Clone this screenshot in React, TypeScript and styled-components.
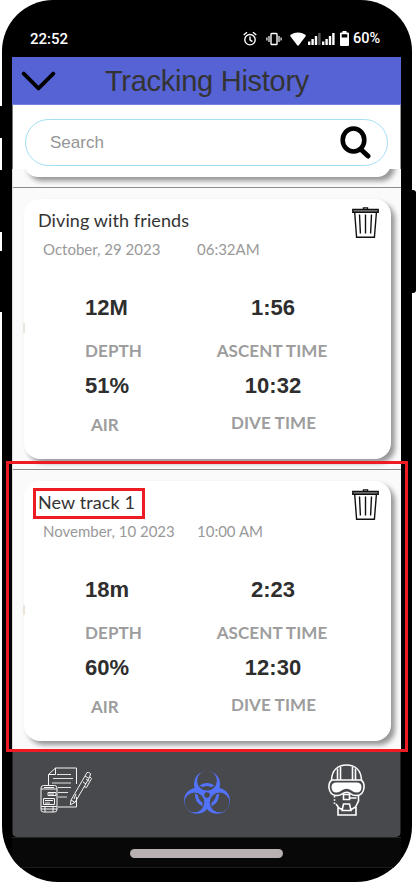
import React from "react";
import styled, { createGlobalStyle } from "styled-components";

const Global = createGlobalStyle`
  * { box-sizing: border-box; }
  body { margin: 0; background: #fff; overflow: hidden; }
`;

const Stage = styled.main`
  position: relative;
  width: 417px;
  height: 883px;
  overflow: hidden;
  font-family: "Liberation Sans", Arial, sans-serif;
`;

const SideKey = styled.i<{ $top: number; $height: number; $right?: boolean }>`
  position: absolute;
  top: ${(p) => p.$top}px;
  height: ${(p) => p.$height}px;
  width: 8px;
  ${(p) => (p.$right ? "left: 408px; border-radius: 0 3px 3px 0;" : "left: -6px;")}
  background: #000;
`;

const Phone = styled.div`
  position: relative;
  width: 410px;
  height: 882px;
  margin-left: 2px;
  padding: 0 11px 0 10px;
  border-radius: 51px 51px 56px 56px;
  background: #000;
  overflow: hidden;
`;

const StatusBar = styled.header`
  display: flex;
  justify-content: space-between;
  align-items: center;
  height: 57px;
  padding: 20px 19px 0 18px;
  color: #fff;
  font: 500 15px/18px Roboto, sans-serif;
`;

const StatusIcons = styled.div`
  display: flex;
  align-items: center;
`;

const Percent = styled.span`
  margin-left: 4px;
  width: 29px;
  padding-top: 1px;
  font-size: 14.5px;
  font-weight: 500;
`;

const TitleBar = styled.div`
  display: flex;
  align-items: center;
  height: 48px;
  padding-left: 9px;
  background: #5663d5;
  border-bottom: 1px solid #7781e0;
`;

const Heading = styled.h1`
  margin: 0 0 0 49px;
  color: #333;
  font-size: 29px;
  letter-spacing: -0.27px;
  font-weight: 400;
  line-height: 48px;
  white-space: nowrap;
`;

const SearchArea = styled.div`
  height: 64px;
  padding: 14px 12px 0 12px;
  background: #fff;
  border-left: 1px solid #777;
  border-right: 1px solid #999;
`;

const SearchBox = styled.label`
  display: flex;
  align-items: center;
  justify-content: space-between;
  height: 47px;
  padding: 0 16px 0 24px;
  border: 1px solid #a4def3;
  border-radius: 24px;
  color: #959595;
  font-size: 17px;
`;

const List = styled.section`
  height: 582px;
  background: #fafafa;
  border-left: 1px solid #ddd;
  overflow: hidden;
`;

const PreviousTail = styled.div`
  height: 18px;
  overflow: hidden;

  &::before {
    content: "";
    display: block;
    width: 367px;
    height: 28px;
    margin: -20px 0 0 11px;
    border-radius: 16px;
    background: #fff;
    box-shadow: 4px 4px 5px rgba(0, 0, 0, 0.4);
  }
`;

const Track = styled.article`
  height: 282px;
  padding: 11px 10px 0 11px;
  border-top: 1px solid #8c8c8c;
`;

const Card = styled.div`
  position: relative;
  width: 367px;
  height: 260px;
  padding: 7px 12px 0 14px;
  border-radius: 16px;
  background: #fff;
  box-shadow: 4px 4px 5px rgba(0, 0, 0, 0.4);

  &::before {
    content: "";
    position: absolute;
    left: -1px;
    top: 124px;
    width: 2px;
    height: 10px;
    background: #ebe4da;
  }
`;

const CardTop = styled.div`
  display: flex;
  justify-content: space-between;
  height: 34px;
`;

const Name = styled.h2`
  margin: 0;
  color: #333;
  font: 400 18px/28px Lato, sans-serif;
  letter-spacing: 0.1px;
`;

const When = styled.div`
  display: grid;
  grid-template-columns: 154px 1fr;
  height: 52px;
  padding-left: 5px;
  color: #999;
  font: 400 15px/18px Lato, sans-serif;
`;

const Stats = styled.div`
  display: grid;
  grid-template-columns: 129px 118px;
  padding-left: 47px;
`;

const Reading = styled.div<{ $center?: boolean }>`
  display: flex;
  flex-direction: column;
  height: 78px;
  align-items: ${(p) => (p.$center ? "center" : "flex-start")};
`;

const Value = styled.strong`
  height: 43px;
  color: #2e2e2e;
  font-size: 22px;
  line-height: 32px;
`;

const Label = styled.span<{ $indent?: number; $lift?: number }>`
  margin-left: ${(p) => p.$indent ?? 0}px;
  margin-top: ${(p) => -(p.$lift ?? 0)}px;
  color: #9d9d9d;
  font: 700 17px/32px Lato, sans-serif;
  letter-spacing: ${(p) => (p.$indent === 6 ? 0 : 0.1)}px;
  white-space: nowrap;
`;

const BottomNav = styled.nav`
  display: flex;
  height: 86px;
  padding: 13px 36px 0 28px;
  justify-content: space-between;
  align-items: flex-start;
  background: linear-gradient(90deg, #222 1px, #48494d 1px, #48494d 388px, #222 388px);
  border-radius: 0 0 5px 5px;
`;

const HomeStrip = styled.footer`
  display: flex;
  justify-content: center;
  height: 31px;
  padding-top: 11px;
  background: #080808;
  border-top: 1px solid #242424;
  border-bottom: 1px solid #1c1c1c;
`;

const HomePill = styled.i`
  width: 153px;
  height: 9px;
  border-radius: 5px;
  background: #b9b1b1;
`;

const Mark = styled.div<{ $x: number; $y: number; $w: number; $h: number }>`
  position: absolute;
  left: ${(p) => p.$x}px;
  top: ${(p) => p.$y}px;
  width: ${(p) => p.$w}px;
  height: ${(p) => p.$h}px;
  border: 3px solid #ed1c24;
`;

const Icon = styled.svg<{ $ml?: number; $mt?: number }>`
  display: block;
  flex: none;
  margin-left: ${(p) => p.$ml ?? 0}px;
  margin-top: ${(p) => p.$mt ?? 0}px;
`;

const AlarmIcon = () => (
  <Icon width="14" height="16" viewBox="0 0 14 16" fill="none" stroke="#fff" strokeWidth="1.4">
    <circle cx="7" cy="8.7" r="5.2" />
    <path d="M.7 4 4 1.2M13.3 4 10 1.2M7 5.5v3.4l2.4 1.7" />
  </Icon>
);

const VibrateIcon = () => (
  <Icon $ml={9} width="16" height="14" viewBox="0 0 16 14" fill="none" stroke="#fff" strokeWidth="1.4">
    <rect x="5" y="1.5" width="6" height="11" rx=".8" />
    <path d="M3 4v6M13 4v6M.9 5.5v3M15.1 5.5v3" strokeWidth="1.2" />
  </Icon>
);

const WifiIcon = () => (
  <Icon $ml={8} width="16" height="14" viewBox="0 0 16 14">
    <path d="M0 3.8C4-.6 12-.6 16 3.8L8.8 13.3Q8 14.2 7.2 13.3Z" fill="#fff" />
  </Icon>
);

const SignalIcon = ({ dim }: { dim?: boolean }) => (
  <Icon $ml={dim ? 2 : 1} width="13" height="12" viewBox="0 0 13 12" fill="#fff">
    <path d="M0 8.500h2.400V12H0zM3.400 6h2.400v6H3.400zM6.800 3h2.400v9H6.800z" />
    <path d="M10.200 0h2.400v12h-2.400z" opacity={dim ? 0.35 : 1} />
  </Icon>
);

const BatteryIcon = () => (
  <Icon $ml={5} width="9" height="15" viewBox="0 0 9 15" fill="#fff">
    <path fillRule="evenodd" d="M2.500 0h4v1.500H8q1 0 1 1V14q0 1-1 1H1q-1 0-1-1V2.500q0-1 1-1h1.500zM1.700 3.300v3.200h5.600V3.300z" />
  </Icon>
);

const ChevronIcon = () => (
  <Icon $mt={1} width="35" height="20" viewBox="0 0 35 20" fill="none" stroke="#000" strokeWidth="3.8" strokeLinecap="round" strokeLinejoin="round">
    <path d="M2.700 2.600 17.500 17.400 32.300 2.600" />
  </Icon>
);

const SearchIcon = () => (
  <Icon width="31" height="33" viewBox="0 0 31 33" fill="none" stroke="#000">
    <ellipse cx="13.500" cy="14" rx="10.800" ry="11.500" strokeWidth="4.600" />
    <path d="m21.500 24 6.500 6" strokeWidth="5" strokeLinecap="round" />
  </Icon>
);

const TrashIcon = () => (
  <Icon $mt={1} width="27" height="32" viewBox="0 0 27 32" fill="none" stroke="#111" strokeWidth="1.400">
    <path d="M11.500 2.200V.9h4v1.300" />
    <path d="M.8 2.500h25.400v2.700H.8z" fill="#888" />
    <path d="m2.700 5.500 1.900 24.700h17.800l2-24.700" />
    <path d="m7.500 7.500.9 19M13.500 7.500v19M19.500 7.500l-.9 19" />
  </Icon>
);

const LogbookIcon = () => (
  <Icon $mt={3} width="53" height="46" viewBox="0 0 53 46" fill="none" stroke="#f4f4f4" strokeWidth="1">
    <path d="M8.500 18V7.500l7-6.500h21v16M36.500 30v10H18M8.500 7.500h7V1" />
    <path d="M17 7.500h14M13 11.500h20M12 16h19M18 20.500h13M18 25.500h10M18 30h9" strokeWidth=".9" />
    <rect x="1" y="18.500" width="16" height="26.500" rx="2.500" />
    <path d="M1 22h16M4 20.500h10M1 39.500h16M1 42h16M5 39.500V45M13 39.500V45M3.500 31.500h11v6h-11zM8 25.500h8v3H8zM5 33.500h8M5 36h5M9 27h5" />
    <path d="m31 33 14-24 4 2.400-14 24-4.700 2.400zM31 33l4 2.400M45 9l2-3.500q1.500-.7 3.700 1.300L49 11.400M50 10l1.500 1.500-5 9-2.500-1M46 12l3 2M43 15l3 2M36 27l-2 5" />
  </Icon>
);

const BiohazardIcon = () => (
  <Icon $ml={-8} $mt={7} width="46" height="43" viewBox="0 0 46 43">
    <defs>
      <mask id="blade-mask">
        <rect width="46" height="43" fill="#fff" />
        <g fill="#000">
          <circle cx="23" cy="9.700" r="9.900" />
          <circle cx="10.400" cy="31.400" r="9.900" />
          <circle cx="35.600" cy="31.400" r="9.900" />
          <circle cx="23" cy="24" r="2.800" />
        </g>
      </mask>
      <mask id="arc-mask">
        <rect width="46" height="43" fill="#fff" />
        <path d="m23 24-13-7.500M23 24l13-7.500M23 24v16" stroke="#000" strokeWidth="9" />
      </mask>
    </defs>
    <g mask="url(#blade-mask)" fill="#5272fb">
      <circle cx="23" cy="13" r="13" />
      <circle cx="13" cy="29.700" r="13" />
      <circle cx="33" cy="29.700" r="13" />
    </g>
    <circle cx="23" cy="24" r="10.500" fill="none" stroke="#5272fb" strokeWidth="3" mask="url(#arc-mask)" />
  </Icon>
);

const DiverIcon = () => (
  <Icon width="37" height="52" viewBox="0 0 37 52" fill="none" stroke="#fff" strokeWidth="1.600">
    <path d="M3.500 16C4 6 10 1 18.500 1S33 6 33.500 16" />
    <path d="M9.500 4.500V16M12.500 3V16M24.500 3V16M27.500 4.500V16" />
    <path d="M4 16h29q3.500 2 3 8-1 7-7 7.500-4 .3-6-1.500-4-3.500-9 0-2 1.800-6 1.500-6-.5-7-7.500-.5-6 3-8z" fill="#48494d" />
    <path d="M8.500 18.500h20q5 0 5 4.500 0 5.500-5 5.500-3 0-5-2-5-3.500-10 0-2 2-5 2-5 0-5-5.500 0-4.500 5-4.500z" fill="#fff" stroke="none" />
    <path d="M6.500 32v8" strokeDasharray="1.500 1.800" />
    <path d="M30.500 31v6l-3 6-5 3M8 40l3 4 4 2M10 43v8h18v-8M15.500 30.500h6v5h-6zM15.500 40h6l1.500 6.500h-9zM21.500 36v-2h7" />
  </Icon>
);

type TrackData = {
  name: string;
  date: string;
  time: string;
  depth: string;
  ascent: string;
  air: string;
  dive: string;
};

const tracks: TrackData[] = [
  { name: "Diving with friends", date: "October, 29 2023", time: "06:32AM", depth: "12M", ascent: "1:56", air: "51%", dive: "10:32" },
  { name: "New track 1", date: "November, 10 2023", time: "10:00 AM", depth: "18m", ascent: "2:23", air: "60%", dive: "12:30" },
];

const TrackCard = ({ track }: { track: TrackData }) => (
  <Track>
    <Card>
      <CardTop>
        <Name>{track.name}</Name>
        <TrashIcon />
      </CardTop>
      <When>
        <span>{track.date}</span>
        <span>{track.time}</span>
      </When>
      <Stats>
        <Reading>
          <Value>{track.depth}</Value>
          <Label>DEPTH</Label>
        </Reading>
        <Reading $center>
          <Value>{track.ascent}</Value>
          <Label $indent={-2}>ASCENT TIME</Label>
        </Reading>
        <Reading>
          <Value>{track.air}</Value>
          <Label $indent={6} $lift={4}>AIR</Label>
        </Reading>
        <Reading $center>
          <Value>{track.dive}</Value>
          <Label $indent={1} $lift={6}>DIVE TIME</Label>
        </Reading>
      </Stats>
    </Card>
  </Track>
);

export default function App() {
  return (
    <Stage>
      <Global />
      <SideKey $top={106} $height={32} />
      <SideKey $top={170} $height={62} />
      <SideKey $top={251} $height={61} />
      <SideKey $top={190} $height={103} $right />
      <Phone>
        <StatusBar>
          <span>22:52</span>
          <StatusIcons>
            <AlarmIcon />
            <VibrateIcon />
            <WifiIcon />
            <SignalIcon dim />
            <SignalIcon />
            <BatteryIcon />
            <Percent>60%</Percent>
          </StatusIcons>
        </StatusBar>
        <TitleBar>
          <ChevronIcon />
          <Heading>Tracking History</Heading>
        </TitleBar>
        <SearchArea>
          <SearchBox>
            <span>Search</span>
            <SearchIcon />
          </SearchBox>
        </SearchArea>
        <List>
          <PreviousTail />
          {tracks.map((t) => (
            <TrackCard key={t.name} track={t} />
          ))}
        </List>
        <BottomNav>
          <LogbookIcon />
          <BiohazardIcon />
          <DiverIcon />
        </BottomNav>
        <HomeStrip>
          <HomePill />
        </HomeStrip>
      </Phone>
      <Mark $x={6} $y={461} $w={402} $h={291} />
      <Mark $x={33} $y={488} $w={112} $h={31} />
    </Stage>
  );
}
